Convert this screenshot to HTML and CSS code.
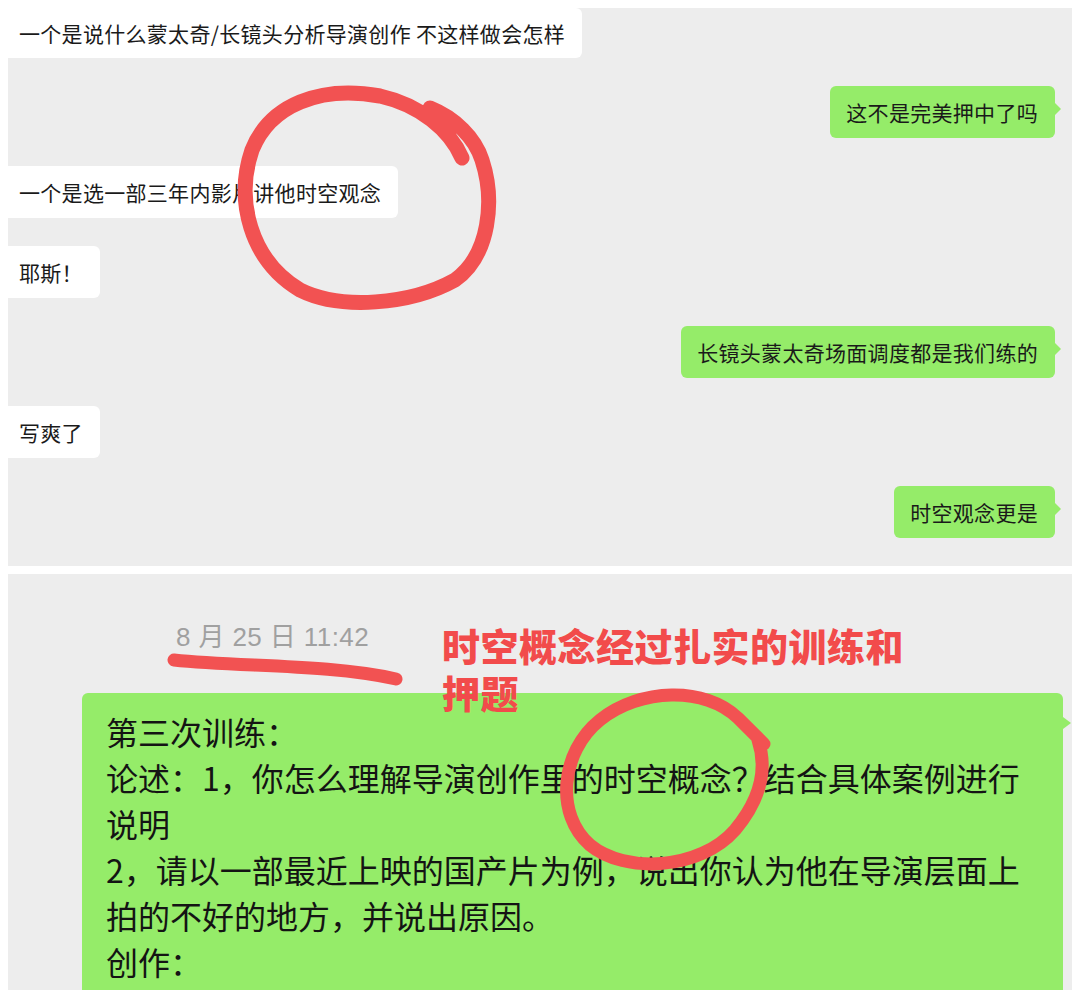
FILE: index.html
```html
<!DOCTYPE html>
<html lang="zh">
<head>
    <meta charset="UTF-8">
    <meta name="viewport" content="width=device-width, initial-scale=1.0">
    <title>聊天截图</title>
    <link rel="stylesheet" href="styles.css">
</head>
<body>
    <div class="page">
        <div class="chat">
            <div class="msg left first">一个是说什么蒙太奇/长镜头分析导演创作 不这样做会怎样</div>
            <div class="msg right">这不是完美押中了吗</div>
            <div class="msg left">一个是选一部三年内影片讲他时空观念</div>
            <div class="msg left">耶斯！</div>
            <div class="msg right">长镜头蒙太奇场面调度都是我们练的</div>
            <div class="msg left">写爽了</div>
            <div class="msg right">时空观念更是</div>
        </div>

        <div class="chat second">
            <div class="time">8 月 25 日 11:42</div>
            <div class="msg big">第三次训练：<br>论述：1，你怎么理解导演创作里的时空概念？结合具体案例进行<br>说明<br>2，请以一部最近上映的国产片为例，说出你认为他在导演层面上<br>拍的不好的地方，并说出原因。<br>创作：</div>
            <div class="note">时空概念经过扎实的训练和<br>押题</div>
        </div>

        <!-- 红笔圈注 -->
        <svg class="marks" width="1080" height="998" viewBox="0 0 1080 998">
            <path d="M 462 158 C 450 130, 420 105, 380 96 C 320 85, 270 105, 252 150 C 235 200, 250 260, 300 290 C 340 310, 410 305, 455 280 C 490 255, 495 200, 482 160 C 475 138, 455 118, 430 108" />
            <path class="thin" d="M 174 660 C 240 667, 330 664, 396 679" />
            <path class="thin" d="M 764 744 L 738 718 C 705 686, 640 688, 600 720 C 560 752, 555 815, 590 845 C 625 874, 700 870, 735 830 C 760 800, 768 770, 758 740" />
        </svg>
    </div>
</body>
</html>
```

FILE: styles.css
```css
body {
    margin: 0;
    background-color: #fff;
    font-family: "Noto Sans CJK SC", "Noto Sans", sans-serif;
    color: #1a1a1a;
}
.page {
    position: relative;
    width: 1080px;
    height: 998px;
    padding-top: 8px;
    box-sizing: border-box;
    overflow: hidden;
}
.chat {
    margin: 0 8px;
    background-color: #ededed;
    display: flex;
    flex-direction: column;
    gap: 28px;
    padding-bottom: 28px;
}
.msg {
    position: relative;
    font-size: 21px;
    line-height: 28px;
    padding: 12px 17px;
    border-radius: 6px;
    white-space: nowrap;
    letter-spacing: 0.3px;
}
.msg.left {
    align-self: flex-start;
    background-color: #fff;
    padding-left: 11px;
    border-radius: 0 6px 6px 0;
}
.msg.first {
    padding-top: 11px;
    padding-bottom: 11px;
}
.msg.right {
    align-self: flex-end;
    margin-right: 17px;
    padding-left: 16px;
    background-color: #95ec69;
}
.msg.right::after,
.msg.big::after {
    content: "";
    position: absolute;
    right: -6px;
    top: 17px;
    border-left: 6px solid #95ec69;
    border-top: 6px solid transparent;
    border-bottom: 6px solid transparent;
}
.second {
    position: relative;
    margin-top: 8px;
    height: 416px;
    padding: 48px 0 0;
    gap: 0;
    overflow: hidden;
    box-sizing: border-box;
}
.time {
    margin-left: 168px;
    font-family: "Liberation Sans", "Noto Sans CJK SC", sans-serif;
    font-size: 26px;
    line-height: 30px;
    color: #a0a0a0;
    letter-spacing: 0.4px;
}
.note {
    position: absolute;
    left: 434px;
    top: 47px;
    font-size: 38px;
    line-height: 47px;
    font-weight: 900;
    color: #f24b4b;
    letter-spacing: 0.5px;
}
.msg.big {
    margin: 41px 9px 0 74px;
    background-color: #95ec69;
    font-size: 32px;
    line-height: 46px;
    padding: 15px 24px 20px;
    color: #141414;
    letter-spacing: 0;
}
.msg.big::after {
    right: -8px;
    top: 24px;
    border-left-width: 8px;
}
.marks {
    position: absolute;
    left: 0;
    top: 0;
    pointer-events: none;
}
.marks path {
    fill: none;
    stroke: #f25252;
    stroke-width: 15;
    stroke-linecap: round;
    stroke-linejoin: round;
}
.marks path.thin {
    stroke-width: 13;
}
```
